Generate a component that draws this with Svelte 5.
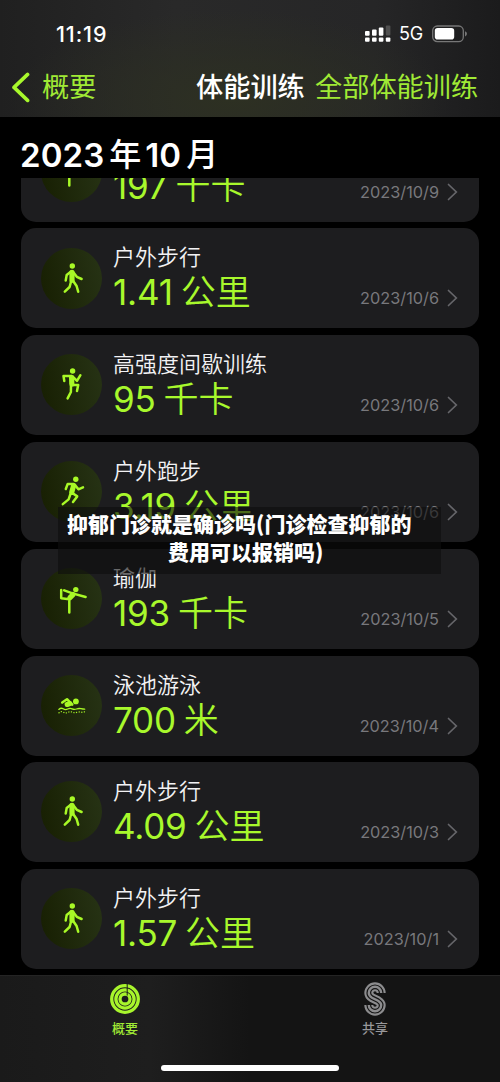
<script>
  const workouts = [
    { icon: "yoga", title: "瑜伽", value: "197", unit: "千卡", date: "2023/10/9" },
    { icon: "walk", title: "户外步行", value: "1.41", unit: "公里", date: "2023/10/6" },
    { icon: "hiit", title: "高强度间歇训练", value: "95", unit: "千卡", date: "2023/10/6" },
    { icon: "run", title: "户外跑步", value: "3.19", unit: "公里", date: "2023/10/6" },
    { icon: "yoga", title: "瑜伽", value: "193", unit: "千卡", date: "2023/10/5" },
    { icon: "swim", title: "泳池游泳", value: "700", unit: "米", date: "2023/10/4" },
    { icon: "walk", title: "户外步行", value: "4.09", unit: "公里", date: "2023/10/3" },
    { icon: "walk", title: "户外步行", value: "1.57", unit: "公里", date: "2023/10/1" },
  ];

  // Stick figures: head position, thick torso stroke, thin limb strokes
  const figures = {
    walk: {
      head: [31.3, 18, 2.7],
      torso: "M31 24.4V32.2",
      limbs: "M29.8 23.6 25.7 27 24.7 32.4M32.5 24.5 35.8 28.8 40.6 31M30.3 32.5 28.6 39 23.8 43.7M31.8 32.5 35.6 38 37.2 43.7",
    },
    hiit: {
      head: [31.6, 17, 2.7],
      torso: "M30.6 23.4 30.8 30",
      limbs: "M30 22 22.5 22 23.3 27M32 22.8 36 26.8 39.4 21.2M31 31H37.2L36 37M30 31 29.9 38 26.6 44.4",
    },
    run: {
      head: [34.8, 18.3, 2.7],
      torso: "M32.6 24.6 30.8 31",
      limbs: "M32.5 23 26.7 22.9 24.8 28M34 24 37.4 28.3 42 26.4M31 31.8 36.2 35.4 32 41M29.8 32 27.6 38.4 21.8 43.1",
    },
    yoga: {
      head: [34.8, 21.6, 2.7],
      torso: "M32 26.6 29 29.6",
      limbs: "M23.2 22.4 31.5 25.4 44.6 29M20.2 22V30.2L28.3 31.2V44.6",
    },
    swim: {
      head: [34.9, 26.4, 2.9],
      torso: "M28.8 28.6 26.2 29.4",
      limbs: "M21.2 27.6 26 24.2 31.3 29.6",
    },
  };

  const rings = [13.3, 9.1, 5];
  const sCurve = "M6.2-6A6.2 6.2 0 0 0-6.2-6C-6.2-3.4-4.6-2.3-3-1.3L3 1.7C4.6 2.7 6.2 3.8 6.2 6A6.2 6.2 0 0 1-6.2 6";
</script>

<div class="phone">
  <header>
    <div class="status">
      <span class="time">11:19</span>
      <svg class="signal" width="26" height="17" viewBox="0 0 26 17">
        <g fill="#fff">
          <rect x="0" y="6" width="4.6" height="4.8" rx="1" />
          <rect x="7" y="4.6" width="4.6" height="6.2" rx="1" />
          <rect x="13.8" y="2.4" width="4.6" height="8.4" rx="1" />
          <rect x="0" y="12.4" width="4.6" height="4.4" rx="1" />
          <rect x="7" y="12.4" width="4.6" height="4.4" rx="1" />
          <rect x="13.8" y="12.4" width="4.6" height="4.4" rx="1" />
          <rect x="20.8" y="12.4" width="4.6" height="4.4" rx="1" />
        </g>
        <rect x="20.8" y="0.4" width="4.6" height="10.2" rx="1" fill="#505050" />
      </svg>
      <span class="net">5G</span>
      <svg class="battery" width="36" height="18" viewBox="0 0 36 18">
        <rect x="0.7" y="1" width="30.6" height="15.6" rx="4.6" fill="none" stroke="#777" stroke-width="1.3" />
        <path d="M33 6.2v5.2q2-.7 2-2.6t-2-2.6z" fill="#777" />
        <rect x="2.8" y="3" width="19.4" height="11.6" rx="2.8" fill="#fff" />
      </svg>
    </div>
    <nav>
      <svg width="20" height="32" viewBox="0 0 20 32">
        <path d="M17.6 2.4 4 15.4 17.6 28.4" fill="none" stroke="#a8f82c" stroke-width="3.6" stroke-linecap="round" stroke-linejoin="round" />
      </svg>
      <span class="back">概要</span>
      <span class="title">体能训练</span>
      <span class="all">全部体能训练</span>
    </nav>
  </header>

  <h1><b>2023</b><i>年</i><b>10</b><i>月</i></h1>

  <main>
    <ul>
      {#each workouts as w}
        {@const f = figures[w.icon]}
        <li>
          <svg class="badge" width="61" height="61" viewBox="0 0 61 61">
            <circle cx="30.5" cy="30.5" r="30.5" fill="url(#glow)" />
            <circle cx={f.head[0]} cy={f.head[1]} r={f.head[2]} fill="#a8f926" />
            <g fill="none" stroke="#a8f926" stroke-linecap="round" stroke-linejoin="round">
              <path d={f.torso} stroke-width="5.2" />
              <path d={f.limbs} stroke-width="2.5" />
              {#if w.icon === "swim"}
                <path d="M17.8 34.4q2.2-2 4.4-.6t4.5.2 4.4-.2 4.4.2 4.4-.3 3.8.5" stroke-width="1.3" />
                <path d="M18 37.8q2.2-2 4.4-.6t4.5.2 4.4-.2 4.4.2 4.4-.3 3.8-.5" stroke-width="1.3" stroke-dasharray="0.1 2.5" />
              {/if}
            </g>
          </svg>
          <div class="info">
            <div class="name">{w.title}</div>
            <div class="amount">
              <span class="value">{w.value}</span>
              <span class="unit">{w.unit}</span>
            </div>
          </div>
          <div class="date">
            {w.date}
            <svg width="11" height="18" viewBox="0 0 11 18">
              <path d="M1.5 1.5 9.3 9 1.5 16.5" fill="none" stroke="#66666a" stroke-width="1.7" stroke-linecap="round" />
            </svg>
          </div>
        </li>
      {/each}
    </ul>
  </main>

  <footer>
    <div class="tabs">
      <div class="tab active">
        <svg width="32" height="34" viewBox="-16 -17 32 34">
          <g fill="none" stroke="#a8f52c">
            {#each rings as r}
              <circle {r} stroke-width="3.3" />
            {/each}
          </g>
          <path d="M2.2-16V-3.4" stroke="#1a1a1a" stroke-width="1" />
        </svg>
        <span>概要</span>
      </div>
      <div class="tab">
        <svg width="32" height="34" viewBox="-16 -17 32 34">
          <g fill="none">
            <path d={sCurve} stroke="#8c8c8e" stroke-width="9" />
            <path d={sCurve} stroke="#151515" stroke-width="4.8" />
            <path d={sCurve} stroke="#8c8c8e" stroke-width="2.4" />
          </g>
        </svg>
        <span>共享</span>
      </div>
    </div>
    <div class="home"></div>
  </footer>

  <div class="caption">
    <p>抑郁门诊就是确诊吗(门诊检查抑郁的</p>
    <p class="second">费用可以报销吗)</p>
  </div>

  <svg class="defs" width="0" height="0">
    <defs>
      <linearGradient id="glow" x1="0" y1="0.6" x2="1" y2="0.4">
        <stop offset="0" stop-color="#182003" />
        <stop offset="1" stop-color="#263214" />
      </linearGradient>
    </defs>
  </svg>
</div>

<style>
  :global(body) {
    background: #000;
  }

  .phone {
    position: relative;
    display: flex;
    flex-direction: column;
    width: 500px;
    height: 1082px;
    overflow: hidden;
    background: #000;
    color: #fff;
    font-family: Inter, "Noto Sans CJK SC", sans-serif;
  }

  header {
    flex: none;
    height: 117px;
    box-sizing: border-box;
    padding-top: 21px;
    background: radial-gradient(ellipse 220px 90px at 46% 85%, #2d3022, transparent),
      linear-gradient(90deg, #202020, #292929 35%, #262627 75%, #1b1b1c);
  }

  .status {
    display: flex;
    align-items: center;
    height: 25px;
    padding-left: 56px;
  }

  .time {
    width: 309px;
    font-size: 21.5px;
    font-weight: 500;
    letter-spacing: 0.9px;
  }

  .net {
    width: 33px;
    margin-left: 8px;
    font-size: 18px;
    letter-spacing: -0.3px;
  }

  nav {
    display: flex;
    align-items: center;
    height: 40px;
    margin-top: 22px;
    padding-left: 10px;
    font-size: 27.2px;
    line-height: 40px;
    white-space: nowrap;
  }

  .back {
    width: 154px;
    margin-left: 12px;
    color: #a0ea35;
  }

  .title {
    width: 119px;
    font-weight: 500;
  }

  .all {
    color: #a0ea35;
  }

  h1 {
    display: flex;
    align-items: center;
    flex: none;
    height: 61px;
    box-sizing: border-box;
    margin: 0;
    padding: 15px 0 0 20px;
    font-size: 33px;
    line-height: 46px;
  }

  h1 b {
    font-weight: 600;
    letter-spacing: 0.1px;
  }

  h1 i {
    margin: 0 4px 0 5px;
    font-size: 32px;
    font-style: normal;
    font-weight: 500;
  }

  main {
    flex: 1;
    min-height: 0;
    overflow: hidden;
  }

  /* The list is scrolled, so the first row is partly hidden */
  ul {
    display: flex;
    flex-direction: column;
    gap: 6.7px;
    margin: -56.4px 21px 0;
    padding: 0;
    list-style: none;
  }

  li {
    display: flex;
    flex: none;
    height: 100.1px;
    box-sizing: border-box;
    padding: 19px 21px 0 20px;
    border-radius: 15px;
    background: #1d1d1f;
  }

  .badge {
    flex: none;
    margin-top: 0.2px;
  }

  .info {
    flex: 1;
    margin: -6px 0 0 11px;
    white-space: nowrap;
  }

  .name {
    height: 32px;
    color: #f2f2f4;
    font-size: 22px;
    font-weight: 350;
    line-height: 33px;
  }

  .amount {
    display: flex;
    align-items: baseline;
    gap: 8px;
    height: 38px;
    color: #a8f82c;
    font-size: 35px;
    line-height: 38px;
  }

  .value {
    font-weight: 400;
    letter-spacing: -0.2px;
  }

  .unit {
    font-weight: 350;
  }

  .date {
    display: flex;
    align-items: center;
    align-self: flex-start;
    gap: 8px;
    height: 20px;
    margin-top: 41px;
    color: #78787c;
    font-size: 16.3px;
  }

  footer {
    flex: none;
    height: 107px;
    box-sizing: border-box;
    border-top: 1px solid #242424;
    background: linear-gradient(90deg, #1a1a1a, #1e1e1e 30%, #141414 50%, #141414);
  }

  .tabs {
    display: flex;
    height: 89px;
  }

  .tab {
    display: flex;
    flex: 1;
    flex-direction: column;
    align-items: center;
    padding-top: 6px;
    color: #98989a;
    font-size: 13px;
    font-weight: 500;
    line-height: 24px;
  }

  .active {
    color: #a0ea35;
  }

  .home {
    width: 178px;
    height: 6px;
    margin-left: 161px;
    border-radius: 3px;
    background: #fff;
  }

  /* Banner laid over the list */
  .caption {
    position: absolute;
    top: 507px;
    left: 58px;
    width: 383px;
    height: 67px;
    box-sizing: border-box;
    padding: 2px 0 0 9px;
    background: rgba(13, 13, 13, 0.6);
    font-family: "Noto Sans CJK SC", sans-serif;
    font-size: 21px;
    font-weight: 900;
    line-height: 28px;
    white-space: nowrap;
  }

  .caption p {
    margin: 0;
  }

  .caption .second {
    padding-left: 101px;
  }

  .defs {
    position: absolute;
  }
</style>
